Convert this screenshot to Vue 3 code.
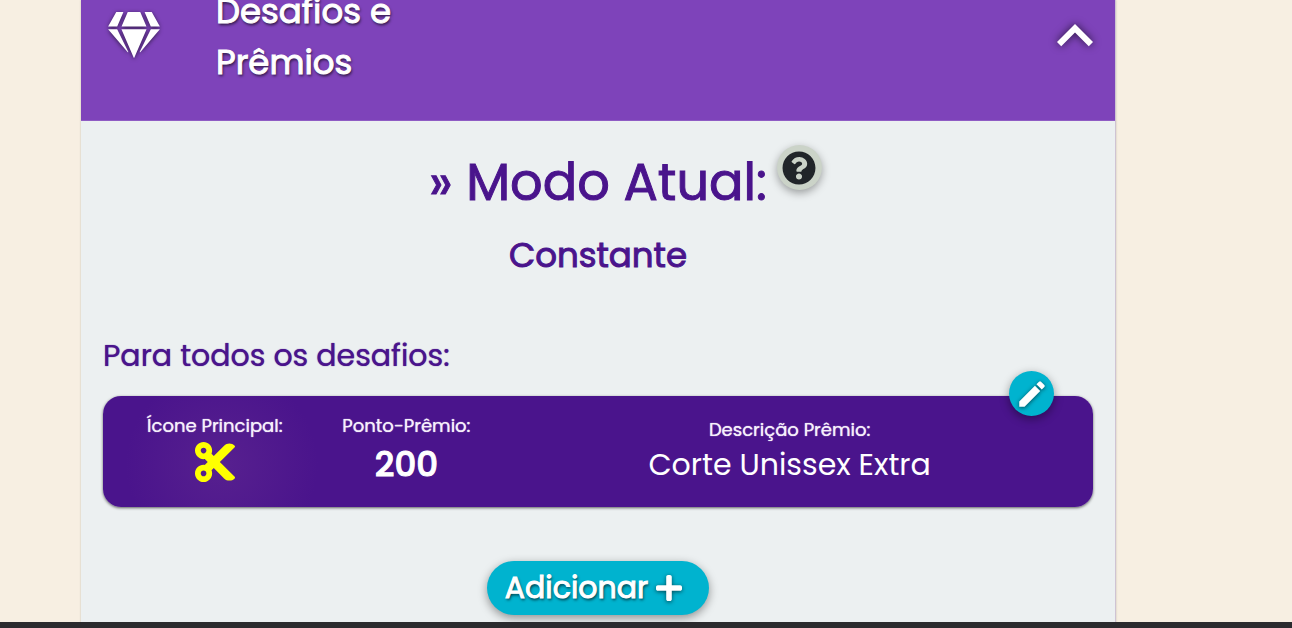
<script setup>
import { ref } from 'vue'

const open = ref(true)
const mode = 'Constante'
const prize = { points: 200, description: 'Corte Unissex Extra' }
</script>

<template>
  <div class="page">
    <main class="panel">
      <header class="panel-header">
        <svg class="gem" viewBox="0 0 576 512" aria-hidden="true">
          <path d="M485.5 0L576 160H474.9L405.7 0h79.8zm-128 0l69.2 160H149.3L218.5 0h139zm-267 0h79.8l-69.2 160H0L90.5 0zM0 192h100.7l123 251.7c1.5 3.1-2.7 5.9-5 3.3L0 192zm148.2 0h279.6l-137 318.2c-1 2.4-4.5 2.4-5.5 0L148.2 192zm204.1 251.7l123-251.7H576L357.3 446.9c-2.3 2.7-6.5-.1-5-3.2z" />
        </svg>
        <h1 class="title">Desafios e Prêmios</h1>
        <button class="toggle" type="button" aria-label="Recolher" :aria-expanded="open" @click="open = !open">
          <svg viewBox="6 8 12 8" aria-hidden="true">
            <path d="M12 8l-6 6 1.41 1.41L12 10.83l4.59 4.58L18 14z" />
          </svg>
        </button>
      </header>

      <div v-if="open" class="panel-body">
        <h2 class="mode-heading">
          » Modo Atual:
          <button class="help" type="button" aria-label="Ajuda">
            <svg viewBox="0 0 512 512" aria-hidden="true">
              <path d="M504 256c0 136.997-111.043 248-248 248S8 392.997 8 256C8 119.083 119.043 8 256 8s248 111.083 248 248zM262.655 90c-54.497 0-89.255 22.957-116.549 63.758-3.536 5.286-2.353 12.415 2.715 16.258l34.699 26.31c5.205 3.947 12.621 3.008 16.665-2.122 17.864-22.658 30.113-35.797 57.303-35.797 20.429 0 45.698 13.148 45.698 32.958 0 14.976-12.363 22.667-32.534 33.976C247.128 238.528 216 254.941 216 296v4c0 6.627 5.373 12 12 12h56c6.627 0 12-5.373 12-12v-1.333c0-28.462 83.186-29.647 83.186-106.667 0-58.002-60.165-102-116.531-102zM256 338c-25.365 0-46 20.635-46 46 0 25.364 20.635 46 46 46s46-20.636 46-46c0-25.365-20.635-46-46-46z" />
            </svg>
          </button>
        </h2>
        <p class="mode">{{ mode }}</p>

        <section class="prizes">
          <h3 class="subtitle">Para todos os desafios:</h3>
          <div class="card">
            <div class="cell">
              <span class="label">Ícone Principal:</span>
              <svg class="scissors" viewBox="0 32 448 448" aria-hidden="true">
                <path d="M278.06 256L444.48 89.57c4.69-4.69 4.69-12.29 0-16.97-32.8-32.8-85.99-32.8-118.79 0L210.18 188.12l-24.86-24.86c4.31-10.92 6.68-22.81 6.68-35.26 0-53.02-42.98-96-96-96S0 74.98 0 128s42.98 96 96 96c4.54 0 8.99-.32 13.36-.93L142.29 256l-32.93 32.93c-4.37-.61-8.83-.93-13.36-.93-53.02 0-96 42.98-96 96s42.98 96 96 96 96-42.98 96-96c0-12.45-2.37-24.34-6.68-35.26l24.86-24.86L325.69 439.4c32.8 32.8 85.99 32.8 118.79 0 4.69-4.68 4.69-12.28 0-16.97L278.06 256zM96 160c-17.64 0-32-14.36-32-32s14.36-32 32-32 32 14.36 32 32-14.36 32-32 32zm0 256c-17.64 0-32-14.36-32-32s14.36-32 32-32 32 14.36 32 32-14.36 32-32 32z" />
              </svg>
            </div>
            <div class="cell">
              <span class="label">Ponto-Prêmio:</span>
              <strong class="points">{{ prize.points }}</strong>
            </div>
            <div class="cell cell-description">
              <span class="label">Descrição Prêmio:</span>
              <span class="description">{{ prize.description }}</span>
            </div>
            <button class="edit" type="button" aria-label="Editar">
              <svg viewBox="0 0 24 24" aria-hidden="true">
                <path d="M3 17.25V21h3.75L17.81 9.94l-3.75-3.75L3 17.25zM20.71 7.04a1 1 0 0 0 0-1.41l-2.34-2.34a1 1 0 0 0-1.41 0l-1.83 1.83 3.75 3.75 1.83-1.83z" />
              </svg>
            </button>
          </div>
        </section>

        <button class="add" type="button">
          Adicionar
          <svg viewBox="0 32 448 448" aria-hidden="true">
            <path d="M416 208H272V64c0-17.67-14.33-32-32-32h-32c-17.67 0-32 14.33-32 32v144H32c-17.67 0-32 14.33-32 32v32c0 17.67 14.33 32 32 32h144v144c0 17.67 14.33 32 32 32h32c17.67 0 32-14.33 32-32V304h144c17.67 0 32-14.33 32-32v-32c0-17.67-14.33-32-32-32z" />
          </svg>
        </button>
      </div>
    </main>
    <footer class="bottom-bar"></footer>
  </div>
</template>

<style>
body {
  background: #f7efe2;
}
</style>

<style scoped>
.page {
  box-sizing: border-box;
  display: flex;
  flex-direction: column;
  min-height: 100vh;
  font-family: Poppins, Inter, "Open Sans", sans-serif;
  color: #4a148c;
}

button {
  padding: 0;
  border: 0;
  font: inherit;
  color: inherit;
  cursor: pointer;
}

svg {
  display: block;
  fill: currentColor;
}

h1, h2, h3, p {
  margin: 0;
  font-weight: 400;
}

.title,
.mode-heading,
.mode,
.points,
.add {
  -webkit-text-stroke: 1px currentColor;
}

.panel {
  flex: 1;
  display: flex;
  flex-direction: column;
  margin: 0 176px 0 81px;
  background: #ecf0f1;
  border-right: 1px solid #cfc3d3;
  box-shadow: 0 0 2px rgba(0, 0, 0, 0.2);
}

.panel-header {
  box-sizing: border-box;
  display: grid;
  grid-template-columns: 52px 200px 1fr;
  column-gap: 56px;
  align-items: end;
  align-content: end;
  height: 121px;
  padding: 0 22px 32px 27px;
  background: #7e43ba;
  border-bottom: 1px solid #8f5cc4;
  color: #fff;
}

.gem {
  width: 52px;
  height: 46px;
  margin-bottom: 30px;
  filter: drop-shadow(0 1px 2px rgba(0, 0, 0, 0.6));
}

.title {
  font-size: 34px;
  line-height: 51px;
  text-shadow: 1px 2px 3px rgba(0, 0, 0, 0.7);
}

.toggle {
  justify-self: end;
  margin-bottom: 40px;
  background: none;
}

.toggle svg {
  width: 36px;
  height: 24px;
  filter: drop-shadow(0 0 4px rgba(0, 0, 0, 0.7));
}

.panel-body {
  display: flex;
  flex-direction: column;
  align-items: center;
  padding: 24px 22px 0;
}

.mode-heading {
  position: relative;
  font-size: 51px;
  line-height: 74px;
}

.help {
  position: absolute;
  top: 0;
  left: 100%;
  display: grid;
  place-items: center;
  width: 45px;
  height: 45px;
  margin-left: 10px;
  border-radius: 50%;
  background: #cbd3c8;
  color: #212529;
  box-shadow: 0 3px 8px rgba(0, 0, 0, 0.35);
}

.help svg {
  width: 34px;
  height: 34px;
}

.mode {
  margin-top: 10px;
  font-size: 34px;
  line-height: 52px;
}

.prizes {
  align-self: stretch;
  margin-top: 52px;
}

.subtitle {
  font-size: 30px;
  line-height: 45px;
  text-shadow: 0 0 1px currentColor;
}

.card {
  position: relative;
  display: grid;
  grid-template-columns: minmax(0, 1fr) minmax(0, 1fr) minmax(0, 3fr);
  margin-top: 18px;
  padding: 0 16px;
  border-radius: 18px;
  background: radial-gradient(circle 96px at 12% 62%, #57208f, #4a148c);
  color: #fff;
  box-shadow: 0 1px 3px rgba(0, 0, 0, 0.6);
}

.cell {
  display: flex;
  flex-direction: column;
  align-items: center;
  padding: 16px 0 19px;
}

.cell-description {
  padding-top: 20px;
}

.label {
  font-size: 18px;
  line-height: 28px;
  color: #f6f0fb;
  text-shadow: 0 0 1px currentColor;
}

.scissors {
  width: 40px;
  height: 40px;
  margin-top: 2px;
  color: #ff0;
}

.points {
  font-size: 34px;
  font-weight: 500;
  line-height: 48px;
}

.description {
  font-size: 30px;
  line-height: 42px;
}

.edit {
  position: absolute;
  top: -25px;
  right: 39px;
  display: grid;
  place-items: center;
  width: 45px;
  height: 45px;
  border-radius: 50%;
  background: #00b3cf;
  color: #fff;
  box-shadow: 0 3px 10px rgba(0, 0, 0, 0.4);
}

.edit svg {
  width: 34px;
  height: 34px;
  filter: drop-shadow(0 1px 2px rgba(0, 0, 0, 0.6));
}

.add {
  display: flex;
  align-items: center;
  gap: 8px;
  margin-top: 54px;
  padding: 0 27px 0 18px;
  border-radius: 27px;
  background: #00b3cf;
  color: #fff;
  font-size: 30px;
  line-height: 54px;
  text-shadow: 1px 2px 3px rgba(0, 0, 0, 0.7);
  box-shadow: 0 3px 10px rgba(0, 0, 0, 0.4);
}

.add svg {
  width: 26px;
  height: 26px;
  filter: drop-shadow(0 1px 2px rgba(0, 0, 0, 0.6));
}

.bottom-bar {
  position: fixed;
  right: 0;
  bottom: 0;
  left: 0;
  height: 6px;
  background: #2b2b2e;
}
</style>
